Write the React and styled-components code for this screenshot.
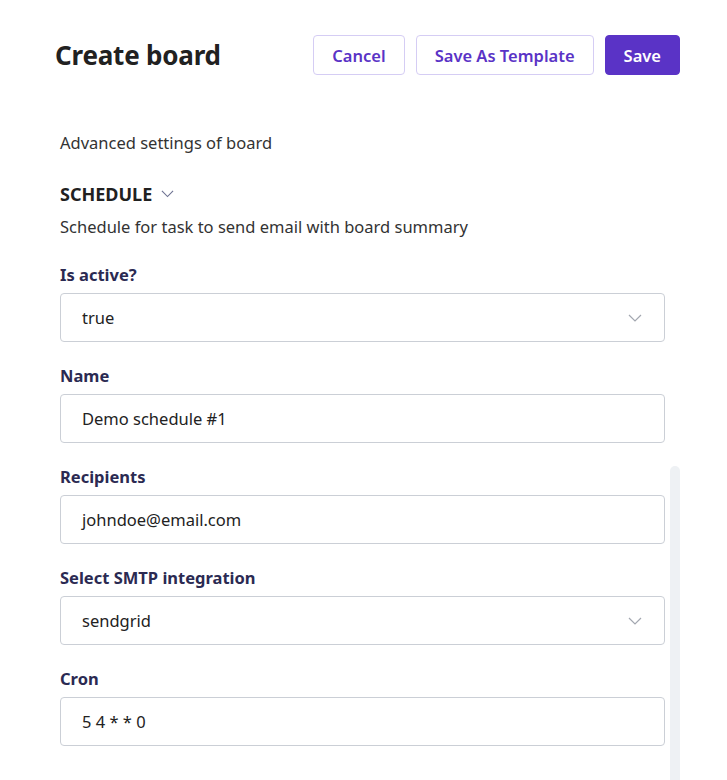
import React from 'react';
import styled, { createGlobalStyle } from 'styled-components';

const GlobalStyle = createGlobalStyle`
  body {
    margin: 0;
    background: #ffffff;
    font-family: 'Noto Sans', 'Open Sans', sans-serif;
    color: #222;
  }
`;

const Page = styled.div`
  position: relative;
  width: 727px;
  height: 780px;
  overflow: hidden;
  background: #fff;
`;

const Header = styled.header`
  display: flex;
  align-items: center;
  justify-content: space-between;
  padding: 35px 47px 0 55px;
  height: 40px;
`;

const Title = styled.h1`
  margin: 0;
  font-size: 26px;
  font-weight: 700;
  color: #212121;
  letter-spacing: -0.2px;
`;

const Actions = styled.div`
  display: flex;
  gap: 11px;
`;

const Button = styled.button`
  height: 40px;
  padding: 0 ${p => p.$pad || 18}px;
  border-radius: 4px;
  font-family: inherit;
  font-size: 16.5px;
  font-weight: 600;
  cursor: pointer;
  border: 1px solid ${p => (p.$primary ? '#5a33c6' : '#d5cdf4')};
  background: ${p => (p.$primary ? '#5a33c6' : '#fff')};
  color: ${p => (p.$primary ? '#fff' : '#5a33c6')};
`;

const Body = styled.main`
  padding: 0 62px 0 60px;
  margin-top: 56px;
`;

const Intro = styled.p`
  margin: 0;
  font-size: 16.5px;
  color: #333;
  line-height: 24px;
`;

const SectionHead = styled.div`
  display: flex;
  align-items: center;
  gap: 9px;
  margin-top: 27px;
  font-size: 18px;
  font-weight: 700;
  color: #212121;
  line-height: 24px;
`;

const SectionDesc = styled.p`
  margin: 9px 0 0;
  font-size: 16.5px;
  color: #333;
  line-height: 24px;
`;

const Field = styled.div`
  display: flex;
  flex-direction: column;
  margin-top: ${p => p.$first ? 24 : 22}px;
`;

const Label = styled.label`
  font-size: 16.5px;
  font-weight: 700;
  color: #2b2a52;
  line-height: 24px;
  margin-bottom: 6px;
`;

const Box = styled.div`
  display: flex;
  align-items: center;
  justify-content: space-between;
  height: 47px;
  padding: 0 22px 0 21px;
  border: 1px solid #cbcfd6;
  border-radius: 4px;
  font-size: 16.5px;
  color: #222;
  background: #fff;
`;

const Track = styled.div`
  position: absolute;
  left: 670px;
  top: 466px;
  width: 10px;
  bottom: 0;
  background: #eef1f4;
  border-radius: 5px 5px 0 0;
`;

const Chevron = ({ color = '#a3a7b0', w = 14 }) => (
  <svg width={w} height={w / 2 + 1} viewBox="0 0 14 8" fill="none">
    <path d="M1 1l6 6 6-6" stroke={color} strokeWidth="1.2" />
  </svg>
);

const fields = [
  { label: 'Is active?', value: 'true', select: true },
  { label: 'Name', value: 'Demo schedule #1' },
  { label: 'Recipients', value: 'johndoe@email.com' },
  { label: 'Select SMTP integration', value: 'sendgrid', select: true },
  { label: 'Cron', value: '5 4 * * 0' },
];

export default function App() {
  return (
    <Page>
      <GlobalStyle />
      <Header>
        <Title>Create board</Title>
        <Actions>
          <Button $pad={18}>Cancel</Button>
          <Button $pad={18}>Save As Template</Button>
          <Button $primary $pad={18}>Save</Button>
        </Actions>
      </Header>
      <Body>
        <Intro>Advanced settings of board</Intro>
        <SectionHead>
          SCHEDULE
          <Chevron color="#6c7191" w={13} />
        </SectionHead>
        <SectionDesc>Schedule for task to send email with board summary</SectionDesc>
        {fields.map((f, i) => (
          <Field key={f.label} $first={i === 0}>
            <Label>{f.label}</Label>
            <Box>
              <span>{f.value}</span>
              {f.select && <Chevron />}
            </Box>
          </Field>
        ))}
      </Body>
      <Track />
    </Page>
  );
}
